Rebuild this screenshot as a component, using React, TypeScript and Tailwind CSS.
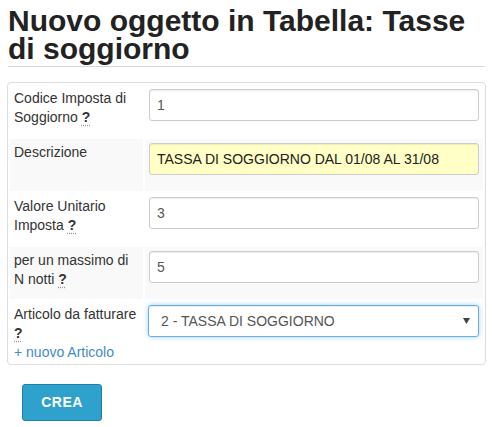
const font = { fontFamily: '"Liberation Sans", Arial, sans-serif' }

function Q() {
  return (
    <abbr
      className="font-bold text-[#333] underline decoration-dotted decoration-[#999] underline-offset-[3px] cursor-help"
      title="aiuto"
    >
      ?
    </abbr>
  )
}

type RowProps = {
  label: React.ReactNode
  children: React.ReactNode
  gray?: boolean
  last?: boolean
}

function Row({ label, children, gray, last }: RowProps) {
  const bg = gray ? 'bg-[#f9f9f9]' : 'bg-white'
  return (
    <div className="flex gap-[2px]">
      <div className={`w-[133px] shrink-0 px-[4px] pt-[4px] ${last ? 'pb-0' : 'pb-[4px]'} text-[14px] leading-[19px] text-[#333] ${bg}`}>
        {label}
      </div>
      <div className={`flex-1 p-[4px] ${bg}`}>{children}</div>
    </div>
  )
}

function Field({ value, yellow }: { value: string; yellow?: boolean }) {
  return (
    <input
      readOnly
      value={value}
      className={`block w-full h-[32px] mb-[12px] pl-[7px] pr-2 text-[14px] rounded-[3px] border border-[#ccc] outline-none shadow-[inset_0_1px_1px_rgba(0,0,0,0.075)] ${
        yellow ? 'bg-[#ffffc6] text-[#222]' : 'bg-white text-[#555]'
      }`}
      style={font}
    />
  )
}

export default function App() {
  return (
    <div className="min-h-screen bg-white px-[7px] pt-[7px]" style={font}>
      <h1 className="text-[30px] font-bold leading-[28px] text-[#222] pl-px">
        Nuovo oggetto in Tabella: Tasse di soggiorno
      </h1>
      <div className="mt-[3px] mx-px border-b border-[#d5d5d5]" />

      <div className="mt-[15px] border border-[#ddd] rounded-[4px] p-[2px] flex flex-col gap-[2px]">
        <Row label={<>Codice Imposta di Soggiorno <Q /></>}>
          <Field value="1" />
        </Row>
        <Row gray label="Descrizione">
          <Field value="TASSA DI SOGGIORNO DAL 01/08 AL 31/08" yellow />
        </Row>
        <Row label={<>Valore Unitario Imposta <Q /></>}>
          <Field value="3" />
        </Row>
        <Row gray label={<>per un massimo di N notti <Q /></>}>
          <Field value="5" />
        </Row>
        <Row
          last
          label={
            <>
              Articolo da fatturare <Q />
              <a href="#" className="block text-[#428bca]">+ nuovo Articolo</a>
            </>
          }
        >
          <div className="relative -ml-px">
            <select
              defaultValue="2"
              className="block w-full h-[32px] appearance-none pl-[12px] pr-8 text-[14px] text-[#555] bg-white rounded-[3px] border border-[#66afe9] outline-none shadow-[inset_0_1px_1px_rgba(0,0,0,0.075),0_0_5px_rgba(102,175,233,0.6)]"
              style={font}
            >
              <option value="2">2 - TASSA DI SOGGIORNO</option>
            </select>
            <svg className="absolute right-[9px] top-[13px] pointer-events-none" width="7" height="6" viewBox="0 0 7 6">
              <path d="M0 0h7L3.5 6z" fill="#444" />
            </svg>
          </div>
        </Row>
      </div>

      <button className="mt-[19px] ml-[15px] w-[80px] h-[37px] rounded-[3px] border border-[#1f7fa6] bg-[#2ea2cc] text-white text-[14px] font-bold tracking-[0.5px]">
        CREA
      </button>
    </div>
  )
}
